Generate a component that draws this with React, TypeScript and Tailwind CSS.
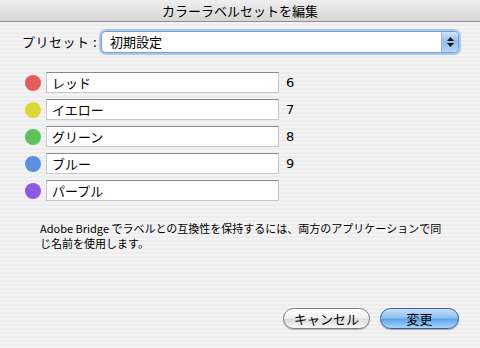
const LABELS = [
  { name: 'レッド', color: 'bg-[#e35d5b]', num: '6' },
  { name: 'イエロー', color: 'bg-[#dcd734]', num: '7' },
  { name: 'グリーン', color: 'bg-[#5cc15b]', num: '8' },
  { name: 'ブルー', color: 'bg-[#5a8fe3]', num: '9' },
  { name: 'パープル', color: 'bg-[#8f5ae3]', num: '' },
];

export default function App() {
  return (
    <div className="w-[480px] h-[348px] flex flex-col overflow-hidden text-black font-['Noto_Sans_CJK_JP','DejaVu_Sans',sans-serif] bg-[repeating-linear-gradient(to_bottom,#ededed_0px,#ededed_2px,#f3f3f3_2px,#f3f3f3_4px)]">
      {/* Title bar */}
      <div className="h-[22px] shrink-0 flex items-center justify-center border-b border-[#8e8e8e] bg-[linear-gradient(to_bottom,#efefef,#d6d6d6)] text-[13px] leading-none">
        カラーラベルセットを編集
      </div>

      {/* Preset */}
      <div className="flex items-center mt-[9px] pl-[22px] h-[22px]">
        <span className="text-[13px] w-[79px] tracking-[0.5px]">プリセット :</span>
        <div className="w-[358px] h-[22px] flex items-stretch rounded-[5px] border border-[#7c9fd2] bg-white shadow-[0_0_0_2px_#a9c8ef]">
          <span className="flex-1 flex items-center pl-[8px] text-[13px]">初期設定</span>
          <div className="w-[17px] flex flex-col items-center justify-center gap-[2px] rounded-r-[4px] bg-[linear-gradient(to_bottom,#cfe3f8,#8fbdec_50%,#b6d6f6)] border-l border-[#9ab7de]">
            <svg width="7" height="4" viewBox="0 0 7 4"><path d="M3.5 0L7 4H0z" fill="#111" /></svg>
            <svg width="7" height="4" viewBox="0 0 7 4"><path d="M0 0h7L3.5 4z" fill="#111" /></svg>
          </div>
        </div>
      </div>

      {/* Label rows */}
      <div className="flex flex-col gap-[6px] mt-[19px] pl-[25px]">
        {LABELS.map((l) => (
          <div key={l.name} className="flex items-center h-[21px]">
            <div className={`w-[16px] h-[16px] rounded-full ${l.color}`} />
            <div className="ml-[5px] w-[233px] h-[21px] flex items-center pl-[5px] bg-white border border-[#c8c8c8] border-t-[#8a8a8a] text-[13px]">
              {l.name}
            </div>
            <span className="ml-[7px] text-[13px] font-['DejaVu_Sans',sans-serif]">{l.num}</span>
          </div>
        ))}
      </div>

      {/* Note */}
      <p className="mt-[20px] pl-[40px] text-[11px] leading-[15px]">
        Adobe Bridge でラベルとの互換性を保持するには、両方のアプリケーションで同
        <br />
        じ名前を使用します。
      </p>

      {/* Buttons */}
      <div className="mt-auto mb-[19px] flex justify-end gap-[10px] pr-[21px]">
        <button className="w-[87px] h-[21px] rounded-full border border-[#7b7b7b] bg-[linear-gradient(to_bottom,#ffffff,#f1f1f1_45%,#dcdcdc_55%,#f7f7f7)] text-[13px] leading-none shadow-[0_1px_1px_rgba(0,0,0,0.25)]">
          キャンセル
        </button>
        <button className="w-[79px] h-[21px] rounded-full border border-[#3b5f9e] bg-[linear-gradient(to_bottom,#c8e1f9,#8cc0f0_45%,#5ea7ec_55%,#a8d6fb)] text-[13px] leading-none shadow-[0_1px_1px_rgba(0,0,0,0.3)]">
          変更
        </button>
      </div>
    </div>
  );
}
